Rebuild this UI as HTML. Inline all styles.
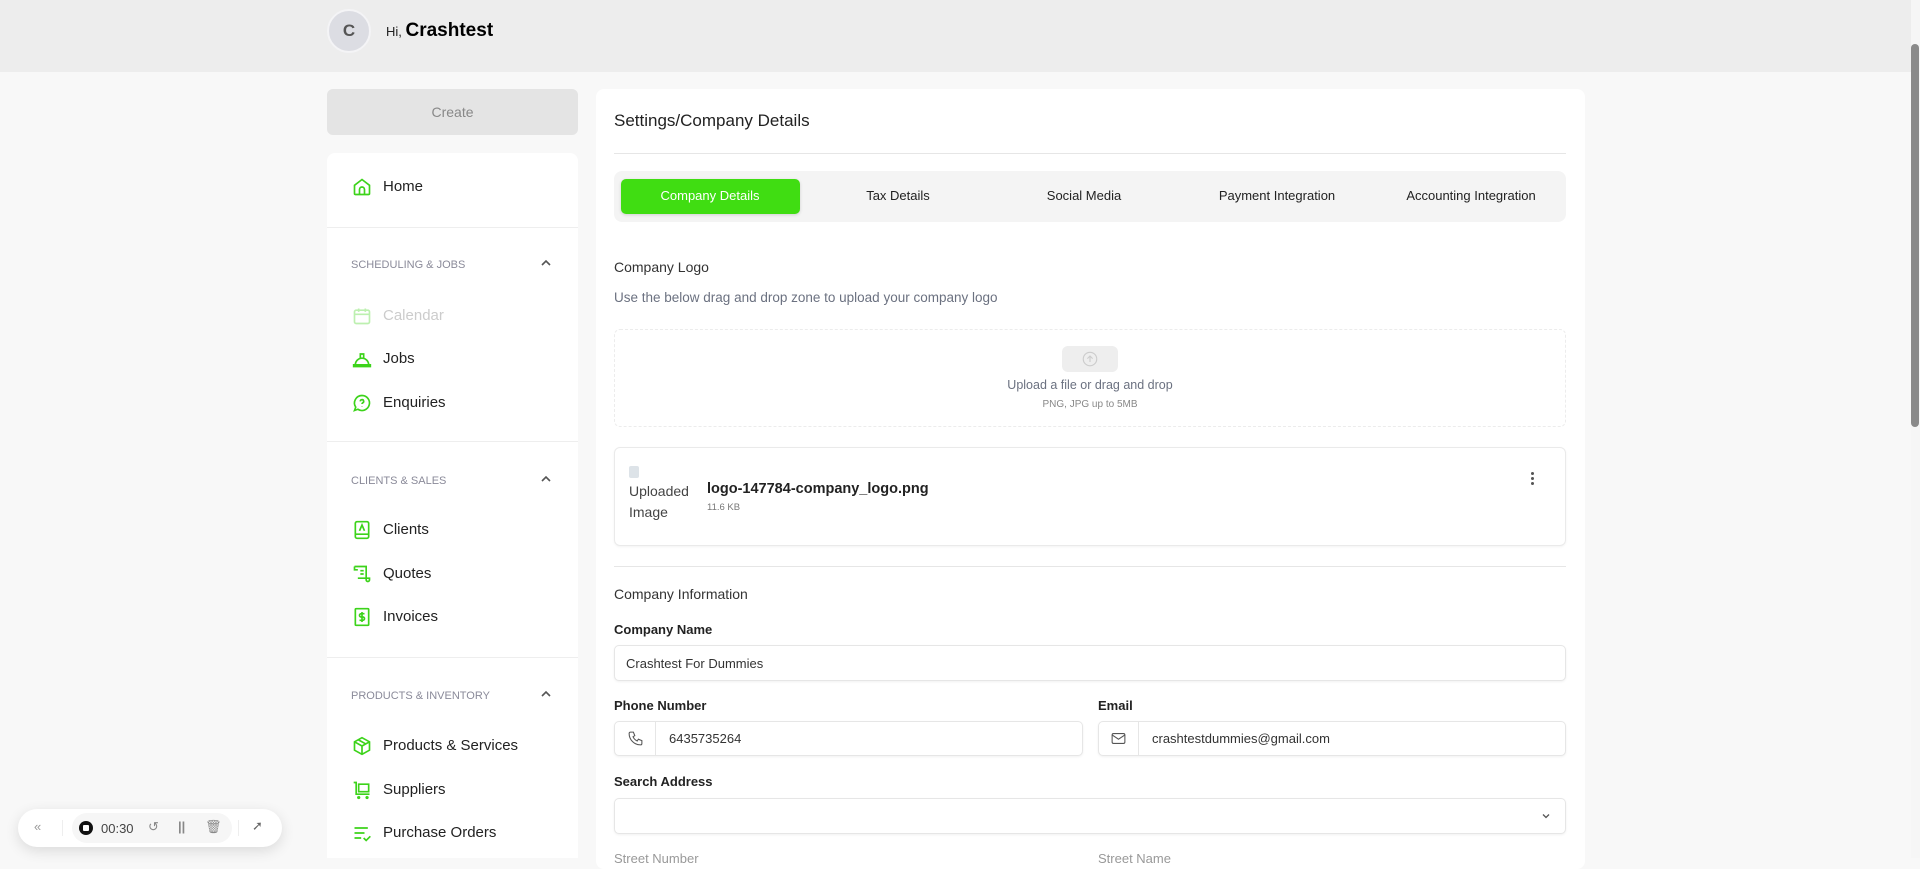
<!DOCTYPE html>
<html><head><meta charset="utf-8"><style>
*{box-sizing:border-box;margin:0;padding:0}
body{width:1920px;height:858px;overflow:hidden;background:#f8f8f8;font-family:"Liberation Sans",sans-serif;color:#111;position:relative}
.abs{position:absolute}
.hdr{left:0;top:0;width:1911px;height:72px;background:#ededed}
.av{left:327px;top:9px;width:44px;height:44px;border-radius:50%;background:#dcdde3;border:2px solid #f4f4f6;color:#555;font-weight:bold;font-size:17px;display:flex;align-items:center;justify-content:center}
.hi{left:386px;top:20px;font-size:13px;color:#222}
.hi b{font-size:19px;color:#000}
.create{left:327px;top:89px;width:251px;height:46px;background:#e4e4e4;border-radius:6px;color:#888;font-size:14px;display:flex;align-items:center;justify-content:center}
.side{left:327px;top:153px;width:251px;height:705px;background:#fff;border-radius:8px 8px 0 0}
.item{left:383px;font-size:15px;color:#222}
.ic{left:352px;width:20px;height:20px}
.sec{left:351px;font-size:11px;color:#8a8a99}
.chev{left:539px;width:14px;height:10px}
.div{left:327px;width:251px;height:1px;background:#eee}
.main{left:596px;top:89px;width:989px;height:780px;background:#fff;border-radius:8px}
.lbl{font-size:13px;font-weight:bold;color:#222}
.inp{background:#fff;border:1px solid #e6e6e6;border-radius:5px;box-shadow:0 1px 2px rgba(0,0,0,.06);font-size:13px;color:#333;display:flex;align-items:center}
.tab{top:188px;font-size:13px;color:#222;width:180px;text-align:center;margin-left:-90px}
</style></head><body>
<div class="abs hdr"></div>
<div class="abs av">C</div>
<div class="abs hi">Hi, <b>Crashtest</b></div>
<div class="abs create">Create</div>
<div class="abs side"></div>
<div class="abs div" style="top:227px"></div>
<div class="abs div" style="top:441px"></div>
<div class="abs div" style="top:657px"></div>

<svg class="abs ic" style="top:177px" viewBox="0 0 24 24" fill="none" stroke="#3cd31a" stroke-width="2"><path d="M3 10l9-7 9 7v10a1 1 0 0 1-1 1H4a1 1 0 0 1-1-1z"/><path d="M9 21v-6a3 3 0 0 1 6 0v6"/></svg>
<div class="abs item" style="top:178px">Home</div>
<div class="abs sec" style="top:259px">SCHEDULING &amp; JOBS</div><svg class="abs chev" style="top:258px" viewBox="0 0 14 10" fill="none" stroke="#555" stroke-width="1.6"><path d="M3 7l4-4 4 4"/></svg>
<svg class="abs ic" style="top:306px" viewBox="0 0 24 24" fill="none" stroke="#bdf0b0" stroke-width="2"><rect x="3" y="5" width="18" height="16" rx="2"/><path d="M3 10h18M8 3v4M16 3v4"/></svg>
<div class="abs item" style="top:307px;color:#ccc">Calendar</div>
<svg class="abs ic" style="top:349px" viewBox="0 0 24 24" fill="none" stroke="#3cd31a" stroke-width="2"><path d="M2 19h20v2H2zM4 19a8 8 0 0 1 16 0M10 11V6h4v5"/></svg>
<div class="abs item" style="top:350px">Jobs</div>
<svg class="abs ic" style="top:393px" viewBox="0 0 24 24" fill="none" stroke="#3cd31a" stroke-width="2"><path d="M12 3a9 9 0 1 1-5 16.5L3 21l1.5-4A9 9 0 0 1 12 3z"/><path d="M10 10a2 2 0 1 1 3 1.7c-.7.4-1 .8-1 1.5M12 16v.5"/></svg>
<div class="abs item" style="top:394px">Enquiries</div>
<div class="abs sec" style="top:475px">CLIENTS &amp; SALES</div><svg class="abs chev" style="top:474px" viewBox="0 0 14 10" fill="none" stroke="#555" stroke-width="1.6"><path d="M3 7l4-4 4 4"/></svg>
<svg class="abs ic" style="top:520px" viewBox="0 0 24 24" fill="none" stroke="#3cd31a" stroke-width="2"><rect x="4" y="2" width="16" height="20" rx="2"/><path d="M4 17h16M9 13l3-7 3 7"/></svg>
<div class="abs item" style="top:521px">Clients</div>
<svg class="abs ic" style="top:564px" viewBox="0 0 24 24" fill="none" stroke="#3cd31a" stroke-width="2"><path d="M3 3h14v16a2 2 0 0 0 4 0v-2H7M3 3v4h4M10 8h4M10 12h4"/></svg>
<div class="abs item" style="top:565px">Quotes</div>
<svg class="abs ic" style="top:607px" viewBox="0 0 24 24" fill="none" stroke="#3cd31a" stroke-width="2"><rect x="4" y="2" width="16" height="20" rx="1"/><path d="M15 8h-4a2 2 0 0 0 0 4h2a2 2 0 0 1 0 4H9M12 6v12"/></svg>
<div class="abs item" style="top:608px">Invoices</div>
<div class="abs sec" style="top:690px">PRODUCTS &amp; INVENTORY</div><svg class="abs chev" style="top:689px" viewBox="0 0 14 10" fill="none" stroke="#555" stroke-width="1.6"><path d="M3 7l4-4 4 4"/></svg>
<svg class="abs ic" style="top:736px" viewBox="0 0 24 24" fill="none" stroke="#3cd31a" stroke-width="2"><path d="M12 2l9 5v10l-9 5-9-5V7zM3 7l9 5 9-5M12 12v10M7.5 4.5l9 5"/></svg>
<div class="abs item" style="top:737px">Products &amp; Services</div>
<svg class="abs ic" style="top:780px" viewBox="0 0 24 24" fill="none" stroke="#3cd31a" stroke-width="2"><path d="M2 3h3v14h16M8 5h12v9H8zM8 20a1 1 0 1 0 .1 0M18 20a1 1 0 1 0 .1 0"/></svg>
<div class="abs item" style="top:781px">Suppliers</div>
<svg class="abs ic" style="top:823px" viewBox="0 0 24 24" fill="none" stroke="#3cd31a" stroke-width="2"><path d="M3 6h16M3 12h12M3 18h8M14 18l3 3 5-5"/></svg>
<div class="abs item" style="top:824px">Purchase Orders</div>

<div class="abs main"></div>
<div class="abs" style="left:614px;top:111px;font-size:17px;color:#222">Settings/Company Details</div>
<div class="abs" style="left:614px;top:153px;width:952px;height:1px;background:#e6e6e6"></div>
<div class="abs" style="left:614px;top:171px;width:952px;height:51px;background:#f4f4f4;border-radius:8px"></div>
<div class="abs" style="left:621px;top:179px;width:179px;height:35px;background:#40dd12;border-radius:5px;box-shadow:0 1px 3px rgba(0,0,0,.15)"></div>
<div class="abs tab" style="left:710px;color:#fff">Company Details</div>
<div class="abs tab" style="left:898px">Tax Details</div>
<div class="abs tab" style="left:1084px">Social Media</div>
<div class="abs tab" style="left:1277px">Payment Integration</div>
<div class="abs tab" style="left:1471px">Accounting Integration</div>
<div class="abs" style="left:614px;top:259px;font-size:14px;color:#333">Company Logo</div>
<div class="abs" style="left:614px;top:290px;font-size:13.5px;color:#6b7180">Use the below drag and drop zone to upload your company logo</div>
<div class="abs" style="left:614px;top:329px;width:952px;height:98px;border:1px dashed #ececec;border-radius:6px"></div>
<div class="abs" style="left:1062px;top:346px;width:56px;height:26px;background:#eee;border-radius:6px"></div>
<svg class="abs" style="left:1081px;top:350px" width="18" height="18" viewBox="0 0 24 24" fill="none" stroke="#ccc" stroke-width="1.5"><circle cx="12" cy="12" r="9"/><path d="M12 16V8M8.5 11.5L12 8l3.5 3.5"/></svg>
<div class="abs" style="left:1090px;top:378px;font-size:12.5px;color:#6b7180;width:300px;margin-left:-150px;text-align:center">Upload a file or drag and drop</div>
<div class="abs" style="left:1090px;top:399px;font-size:10px;color:#888;width:200px;margin-left:-100px;text-align:center">PNG, JPG up to 5MB</div>
<div class="abs" style="left:614px;top:447px;width:952px;height:99px;border:1px solid #eaeaea;border-radius:6px;box-shadow:0 1px 2px rgba(0,0,0,.05)"></div>
<div class="abs" style="left:629px;top:466px;width:10px;height:12px;background:#dde3e8;border-radius:2px"></div>
<div class="abs" style="left:629px;top:481px;font-size:14px;color:#444;line-height:21px">Uploaded<br>Image</div>
<div class="abs" style="left:707px;top:481px;font-size:14.5px;font-weight:bold;color:#222">logo-147784-company_logo.png</div>
<div class="abs" style="left:707px;top:502px;font-size:9.5px;color:#777">11.6 KB</div>
<div class="abs" style="left:1531px;top:472px;width:3px;line-height:0"><div style="width:3px;height:3px;background:#555;border-radius:50%;margin-bottom:2px"></div><div style="width:3px;height:3px;background:#555;border-radius:50%;margin-bottom:2px"></div><div style="width:3px;height:3px;background:#555;border-radius:50%"></div></div>
<div class="abs" style="left:614px;top:566px;width:952px;height:1px;background:#e6e6e6"></div>
<div class="abs" style="left:614px;top:586px;font-size:14px;color:#333">Company Information</div>
<div class="abs lbl" style="left:614px;top:622px">Company Name</div>
<div class="abs inp" style="left:614px;top:645px;width:952px;height:36px;padding-left:11px">Crashtest For Dummies</div>
<div class="abs lbl" style="left:614px;top:698px">Phone Number</div>
<div class="abs inp" style="left:614px;top:721px;width:469px;height:35px">
<div style="width:41px;height:100%;border-right:1px solid #e6e6e6;display:flex;align-items:center;justify-content:center"><svg width="17" height="17" viewBox="0 0 24 24" fill="none" stroke="#555" stroke-width="1.5"><path d="M5 3h4l2 5-2.5 1.5a11 11 0 0 0 6 6L16 13l5 2v4a2 2 0 0 1-2 2A16 16 0 0 1 3 5a2 2 0 0 1 2-2"/></svg></div><span style="padding-left:13px">6435735264</span></div>
<div class="abs lbl" style="left:1098px;top:698px">Email</div>
<div class="abs inp" style="left:1098px;top:721px;width:468px;height:35px">
<div style="width:40px;height:100%;border-right:1px solid #e6e6e6;display:flex;align-items:center;justify-content:center"><svg width="17" height="17" viewBox="0 0 24 24" fill="none" stroke="#555" stroke-width="1.5"><rect x="3" y="5" width="18" height="14" rx="2"/><path d="M3 7l9 6 9-6"/></svg></div><span style="padding-left:13px">crashtestdummies@gmail.com</span></div>
<div class="abs lbl" style="left:614px;top:774px">Search Address</div>
<div class="abs inp" style="left:614px;top:798px;width:952px;height:36px"><svg style="position:absolute;right:14px" width="10" height="8" viewBox="0 0 10 8" fill="none" stroke="#555" stroke-width="1.3"><path d="M2 2.5l3 3 3-3"/></svg></div>
<div class="abs" style="left:614px;top:851px;font-size:13px;color:#999">Street Number</div>
<div class="abs" style="left:1098px;top:851px;font-size:13px;color:#999">Street Name</div>

<div class="abs" style="left:1911px;top:0;width:9px;height:858px;background:#f6f6f6"></div>
<div class="abs" style="left:1911px;top:44px;width:8px;height:383px;background:#8a8a8a;border-radius:4px"></div>

<div class="abs" style="left:18px;top:809px;width:264px;height:38px;background:#fff;border-radius:19px;box-shadow:0 4px 14px rgba(0,0,0,.12);font-size:13px;color:#444">
<span class="abs" style="left:16px;top:10px;color:#999">«</span>
<div class="abs" style="left:44px;top:11px;width:1px;height:16px;background:#eee"></div>
<div class="abs" style="left:54px;top:4px;width:160px;height:30px;background:#f6f6f6;border-radius:15px"></div>
<div class="abs" style="left:61px;top:12px;width:14px;height:14px;border-radius:50%;background:#111"></div>
<div class="abs" style="left:65px;top:16px;width:6px;height:6px;background:#fff;border-radius:1px"></div>
<span class="abs" style="left:83px;top:12px">00:30</span>
<span class="abs" style="left:130px;top:10px;color:#888">↺</span>
<span class="abs" style="left:160px;top:10px;color:#888;font-weight:bold">||</span>
<span class="abs" style="left:187px;top:10px;color:#888">🗑</span>
<div class="abs" style="left:220px;top:11px;width:1px;height:16px;background:#eee"></div>
<span class="abs" style="left:234px;top:9px;color:#666">➚</span>
</div>
</body></html>
